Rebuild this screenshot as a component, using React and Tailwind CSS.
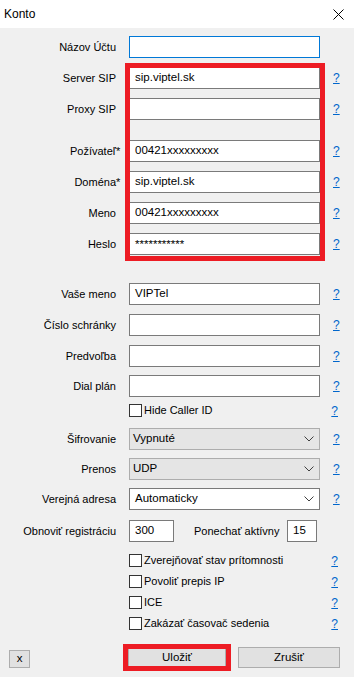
import React from "react"

const font = { fontFamily: "'Liberation Sans', Arial, sans-serif" }

function Help() {
  return <span className="ml-[13px] text-[12px] text-[#0066cc] underline leading-none">?</span>
}

function Label({ children, star }) {
  return (
    <div className="w-[116px] shrink-0 text-right text-[11px] text-black leading-none whitespace-nowrap">
      {children}
      {star && <span className="inline-block w-0">*</span>}
    </div>
  )
}

function Field({ label, value, star, focused, mt, noHelp }) {
  return (
    <div className={`flex items-center h-[22px] ${mt}`}>
      <Label star={star}>{label}</Label>
      <div
        className={`ml-[13px] w-[191px] h-[22px] bg-white border flex items-center pl-[5px] text-[11.5px] text-black ${
          focused ? "border-[#0078d7]" : "border-[#7a7a7a]"
        }`}
      >
        {value}
      </div>
      {!noHelp && <Help />}
    </div>
  )
}

function Chevron() {
  return (
    <svg width="10" height="6" viewBox="0 0 10 6" className="ml-auto mr-[5px]">
      <polyline points="0.5,0.5 5,5 9.5,0.5" fill="none" stroke="#404040" strokeWidth="1" />
    </svg>
  )
}

function Select({ label, value, mt, plain }) {
  return (
    <div className={`flex items-center h-[22px] ${mt}`}>
      <Label>{label}</Label>
      <div
        className={`ml-[13px] w-[191px] h-[22px] border flex items-center text-[11.5px] text-black ${
          plain ? "bg-white border-[#7a7a7a] pl-[5px]" : "bg-[#e5e5e5] border-[#adadad] pl-[3px]"
        }`}
      >
        {value}
        <Chevron />
      </div>
      <Help />
    </div>
  )
}

function Check({ label, mt, h = "h-[21px]" }) {
  return (
    <div className={`flex items-center ${h} ${mt}`}>
      <div className="w-[129px] shrink-0" />
      <div className="w-[13px] h-[13px] border border-[#333] bg-white shrink-0" />
      <span className="ml-[2px] text-[11px] text-black leading-none whitespace-nowrap">{label}</span>
      <span className="ml-auto mr-[16px] text-[12px] text-[#0066cc] underline leading-none">?</span>
    </div>
  )
}

export default function App() {
  return (
    <div className="relative w-[354px] h-[677px] bg-[#f0f0f0] overflow-hidden" style={font}>
      {/* title bar */}
      <div className="h-[28px] bg-white flex items-center px-[4px]">
        <span className="text-[12px] text-black">Konto</span>
        <svg width="11" height="11" viewBox="0 0 11 11" className="ml-auto mr-[6px]">
          <line x1="0.5" y1="0.5" x2="10.5" y2="10.5" stroke="#000" strokeWidth="1" />
          <line x1="10.5" y1="0.5" x2="0.5" y2="10.5" stroke="#000" strokeWidth="1" />
        </svg>
      </div>

      <Field label="Názov Účtu" value="" focused noHelp mt="mt-[8px]" />
      <Field label="Server SIP" value="sip.viptel.sk" mt="mt-[9px]" />
      <Field label="Proxy SIP" value="" mt="mt-[9px]" />
      <Field label="Požívateľ" star value="00421xxxxxxxxx" mt="mt-[20px]" />
      <Field label="Doména" star value="sip.viptel.sk" mt="mt-[9px]" />
      <Field label="Meno" value="00421xxxxxxxxx" mt="mt-[9px]" />
      <Field label="Heslo" value={<span className="self-start mt-[2px]">***********</span>} mt="mt-[9px]" />

      <Field label="Vaše meno" value="VIPTel" mt="mt-[28px]" />
      <Field label="Číslo schránky" value="" mt="mt-[9px]" />
      <Field label="Predvoľba" value="" mt="mt-[9px]" />
      <Field label="Dial plán" value="" mt="mt-[8px]" />

      <Check label="Hide Caller ID" h="h-[13px]" mt="mt-[7px]" />

      <Select label="Šifrovanie" value="Vypnuté" mt="mt-[11px]" />
      <Select label="Prenos" value="UDP" mt="mt-[8px]" />
      <Select label="Verejná adresa" value="Automaticky" plain mt="mt-[8px]" />

      <div className="flex items-center h-[22px] mt-[10px]">
        <Label>Obnoviť registráciu</Label>
        <div className="ml-[13px] w-[45px] h-[22px] bg-white border border-[#7a7a7a] flex items-center pl-[5px] text-[11.5px] text-black">
          300
        </div>
        <span className="ml-[20px] text-[11px] text-black leading-none whitespace-nowrap">Ponechať aktívny</span>
        <div className="ml-auto mr-[37px] w-[30px] h-[22px] bg-white border border-[#7a7a7a] flex items-center pl-[5px] text-[11.5px] text-black">
          15
        </div>
      </div>

      <Check label="Zverejňovať stav prítomnosti" mt="mt-[8px]" />
      <Check label="Povoliť prepis IP" />
      <Check label="ICE" />
      <Check label="Zakázať časovač sedenia" />

      <div className="flex items-center mt-[13px] h-[21px]">
        <div className="ml-[9px] w-[21px] h-[18px] mt-[3px] bg-[#e1e1e1] border border-[#adadad] flex items-center justify-center text-[11.5px] text-black leading-none">
          x
        </div>
        <div className="ml-[98px] w-[98px] h-[20px] bg-[#e1e1e1] border border-[#adadad] flex items-center justify-center text-[11.5px] text-black">
          Uložiť
        </div>
        <div className="ml-[12px] w-[102px] h-[21px] bg-[#e1e1e1] border border-[#adadad] flex items-center justify-center text-[11.5px] text-black">
          Zrušiť
        </div>
      </div>

      {/* red annotation boxes */}
      <div className="absolute left-[125px] top-[63px] w-[200px] h-[198px] border-[5px] border-[#ed1c24] pointer-events-none" />
      <div className="absolute left-[123px] top-[644px] w-[108px] h-[27px] border-[5px] border-[#ed1c24] pointer-events-none" />
    </div>
  )
}
